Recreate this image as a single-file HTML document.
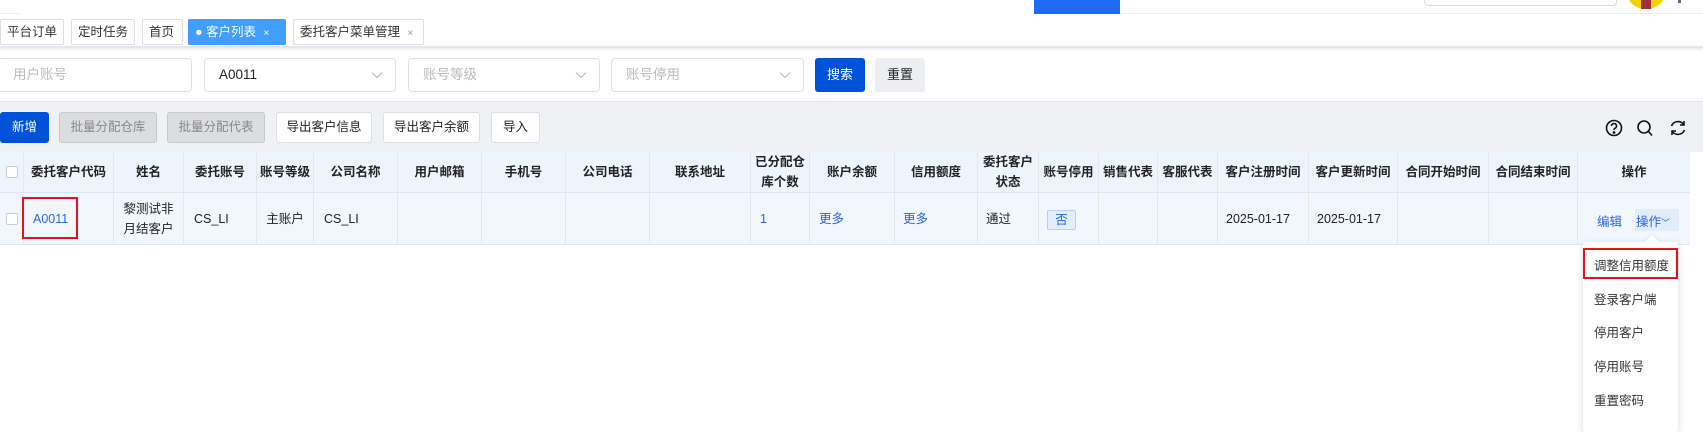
<!DOCTYPE html>
<html><head><meta charset="utf-8"><style>
*{box-sizing:border-box;margin:0;padding:0}
body{width:1703px;height:425px;overflow:hidden;background:#fff;font-family:"Liberation Sans","Noto Sans CJK SC",sans-serif;font-size:13px;color:#222;position:relative}
.a{position:absolute}
.tab{position:absolute;top:19px;height:26px;border:1px solid #dcdfe6;border-radius:2px;background:#fff;line-height:24px;padding:0 6px;font-size:12.5px;color:#333;white-space:nowrap;overflow:hidden}
.inp{position:absolute;top:58px;height:34px;border:1px solid #dcdfe6;border-radius:4px;line-height:32px;padding-left:14px;color:#bbb;font-size:13.5px}
.inp svg{position:absolute;right:12px;top:12px}
.btn{position:absolute;top:112px;height:31px;border:1px solid #dcdfe6;border-radius:3px;background:#fff;line-height:29px;text-align:center;font-size:12.5px;color:#222}
.th,.td{position:absolute;border-right:1px solid #e4e8ee;display:flex;align-items:center;justify-content:center;text-align:center;font-size:12.5px;line-height:20px}
.th{top:152px;height:41px;background:#eef4fc;color:#222;font-weight:bold;border-bottom:1px solid #dfe5ee}
.td{top:193px;height:52px;background:#f2f7fe;border-bottom:1px solid #e0e6ee;color:#222}
.blue{color:#2866e0}
.mi{position:absolute;left:1594px;font-size:12.5px;color:#333}
</style></head><body>
<div class="a" style="left:1034px;top:0;width:86px;height:14px;background:#1f6af5"></div>
<div class="a" style="left:1120px;top:13px;width:583px;height:1px;background:#eee"></div>
<div class="a" style="left:1424px;top:-6px;width:193px;height:12px;border:1px solid #d8d8e0;border-radius:4px"></div>
<div class="a" style="left:1626px;top:-10px;width:40px;height:19px;border-radius:0 0 20px 20px;background:#f7d000"></div>
<div class="a" style="left:1641px;top:0;width:10px;height:9px;background:#a0303a"></div>
<div class="a" style="left:1678px;top:0;width:3px;height:3px;background:#666"></div>
<div class="a" style="left:0;top:13px;width:20px;height:1px;background:#eee"></div>
<div class="tab" style="left:0;width:64px">平台订单</div>
<div class="tab" style="left:71px;width:64px">定时任务</div>
<div class="tab" style="left:142px;width:41px">首页</div>
<div class="tab" style="left:188px;width:98px;background:#409eff;border-color:#409eff;color:#fff">● 客户列表 <span style="font-size:10px;margin-left:4px">×</span></div>
<div class="tab" style="left:293px;width:131px">委托客户菜单管理 <span style="font-size:10px;color:#999;margin-left:4px">×</span></div>
<div class="a" style="left:0;top:46px;width:1703px;height:2px;background:#e6e7ec;box-shadow:0 1px 2px #e0e0e6"></div>
<div class="inp" style="left:-2px;width:194px">用户账号</div>
<div class="inp" style="left:204px;width:192px;color:#222">A0011<svg width="12" height="8" viewBox="0 0 12 8" fill="none" stroke="#bbb" stroke-width="1.2"><path d="M1 1.5l5 5 5-5"/></svg></div>
<div class="inp" style="left:408px;width:192px">账号等级<svg width="12" height="8" viewBox="0 0 12 8" fill="none" stroke="#bbb" stroke-width="1.2"><path d="M1 1.5l5 5 5-5"/></svg></div>
<div class="inp" style="left:611px;width:193px">账号停用<svg width="12" height="8" viewBox="0 0 12 8" fill="none" stroke="#bbb" stroke-width="1.2"><path d="M1 1.5l5 5 5-5"/></svg></div>
<div class="a" style="left:815px;top:58px;width:50px;height:34px;background:#0052d9;border-radius:3px;color:#fff;text-align:center;line-height:34px;font-size:13px">搜索</div>
<div class="a" style="left:875px;top:58px;width:50px;height:34px;background:#eceef1;border-radius:3px;color:#222;text-align:center;line-height:34px;font-size:13px">重置</div>
<div class="a" style="left:0;top:101px;width:1703px;height:51px;background:#f0f1f5;border-top:1px solid #e4e6ea"></div>
<div class="btn" style="left:0;width:49px;background:#0052d9;border-color:#0052d9;color:#fff">新增</div>
<div class="btn" style="left:59px;width:98px;background:#dcdde0;border-color:#c8c9cc;color:#888">批量分配仓库</div>
<div class="btn" style="left:167px;width:98px;background:#dcdde0;border-color:#c8c9cc;color:#888">批量分配代表</div>
<div class="btn" style="left:276px;width:96px">导出客户信息</div>
<div class="btn" style="left:383px;width:97px">导出客户余额</div>
<div class="btn" style="left:491px;width:49px">导入</div>
<svg class="a" style="left:1605px;top:119px" width="85" height="20" viewBox="0 0 85 20" fill="none" stroke="#111" stroke-width="1.6">
<circle cx="9" cy="9" r="7.5"/><path d="M6.5 7a2.5 2.5 0 1 1 3.5 2.3c-.8.4-1 .9-1 1.7"/><circle cx="9" cy="13.5" r=".6" fill="#111"/>
<circle cx="39" cy="8" r="6"/><path d="M43.5 12.5l3.5 4"/>
<path d="M79 6a7 7 0 0 0-12.5 1M67 12a7 7 0 0 0 12.5-1"/><path d="M79 2v4h-4M67 16v-4h4"/>
</svg>
<div class="th" style="left:0;width:24px"><span style="width:12px;height:12px;border:1px solid #ccc;background:#fff;border-radius:2px"></span></div>
<div class="th" style="left:24px;width:90px">委托客户代码</div>
<div class="th" style="left:114px;width:70px">姓名</div>
<div class="th" style="left:184px;width:73px">委托账号</div>
<div class="th" style="left:257px;width:57px">账号等级</div>
<div class="th" style="left:314px;width:84px">公司名称</div>
<div class="th" style="left:398px;width:84px">用户邮箱</div>
<div class="th" style="left:482px;width:84px">手机号</div>
<div class="th" style="left:566px;width:84px">公司电话</div>
<div class="th" style="left:650px;width:101px">联系地址</div>
<div class="th" style="left:751px;width:59px">已分配仓<br>库个数</div>
<div class="th" style="left:810px;width:85px">账户余额</div>
<div class="th" style="left:895px;width:83px">信用额度</div>
<div class="th" style="left:978px;width:61px">委托客户<br>状态</div>
<div class="th" style="left:1039px;width:60px">账号停用</div>
<div class="th" style="left:1099px;width:59px">销售代表</div>
<div class="th" style="left:1158px;width:60px">客服代表</div>
<div class="th" style="left:1218px;width:91px">客户注册时间</div>
<div class="th" style="left:1309px;width:89px">客户更新时间</div>
<div class="th" style="left:1398px;width:91px">合同开始时间</div>
<div class="th" style="left:1489px;width:89px">合同结束时间</div>
<div class="th" style="left:1578px;width:112px;border-right:none">操作</div>
<div class="td" style="left:0;width:24px"><span style="width:12px;height:12px;border:1px solid #ccc;background:#fff;border-radius:2px"></span></div>
<div class="td blue" style="left:24px;width:90px;justify-content:flex-start;padding-left:9px">A0011</div>
<div class="td" style="left:114px;width:70px">黎测试非<br>月结客户</div>
<div class="td" style="left:184px;width:73px;justify-content:flex-start;padding-left:10px">CS_LI</div>
<div class="td" style="left:257px;width:57px">主账户</div>
<div class="td" style="left:314px;width:84px;justify-content:flex-start;padding-left:10px">CS_LI</div>
<div class="td" style="left:398px;width:84px"></div>
<div class="td" style="left:482px;width:84px"></div>
<div class="td" style="left:566px;width:84px"></div>
<div class="td" style="left:650px;width:101px"></div>
<div class="td blue" style="left:751px;width:59px;justify-content:flex-start;padding-left:9px">1</div>
<div class="td blue" style="left:810px;width:85px;justify-content:flex-start;padding-left:9px">更多</div>
<div class="td blue" style="left:895px;width:83px;justify-content:flex-start;padding-left:8px">更多</div>
<div class="td" style="left:978px;width:61px;justify-content:flex-start;padding-left:8px">通过</div>
<div class="td" style="left:1039px;width:60px"></div>
<div class="td" style="left:1099px;width:59px"></div>
<div class="td" style="left:1158px;width:60px"></div>
<div class="td" style="left:1218px;width:91px;justify-content:flex-start;padding-left:8px">2025-01-17</div>
<div class="td" style="left:1309px;width:89px;justify-content:flex-start;padding-left:8px">2025-01-17</div>
<div class="td" style="left:1398px;width:91px"></div>
<div class="td" style="left:1489px;width:89px"></div>
<div class="td" style="left:1578px;width:112px;border-right:none"></div>
<div class="a" style="left:1047px;top:210px;width:29px;height:20px;border:1px solid #b7cdf2;background:#e3eefc;border-radius:2px;text-align:center;line-height:18px;color:#2866e0;font-size:12.5px">否</div>
<div class="a blue" style="left:1597px;top:211px;font-size:12.5px">编辑</div>
<div class="a" style="left:1635px;top:209px;width:44px;height:22px;background:#e2ecfb"></div>
<div class="a blue" style="left:1636px;top:211px;font-size:12.5px">操作<span style="font-size:9px">﹀</span></div>
<div class="a" style="left:22px;top:197px;width:56px;height:42px;border:2.5px solid #e8101a"></div>
<div class="a" style="left:1583px;top:242px;width:95px;height:190px;background:#fff;box-shadow:0 2px 8px rgba(0,0,0,.15);border-radius:3px"></div>
<div class="a" style="left:1647px;top:237px;width:10px;height:10px;background:#fff;transform:rotate(45deg);box-shadow:-1px -1px 2px rgba(0,0,0,.06)"></div>
<div class="a" style="left:1583px;top:248px;width:95px;height:31px;border:2.5px solid #e8101a"></div>
<div class="mi" style="top:255px">调整信用额度</div>
<div class="mi" style="top:289px">登录客户端</div>
<div class="mi" style="top:322px">停用客户</div>
<div class="mi" style="top:356px">停用账号</div>
<div class="mi" style="top:390px">重置密码</div>
</body></html>
